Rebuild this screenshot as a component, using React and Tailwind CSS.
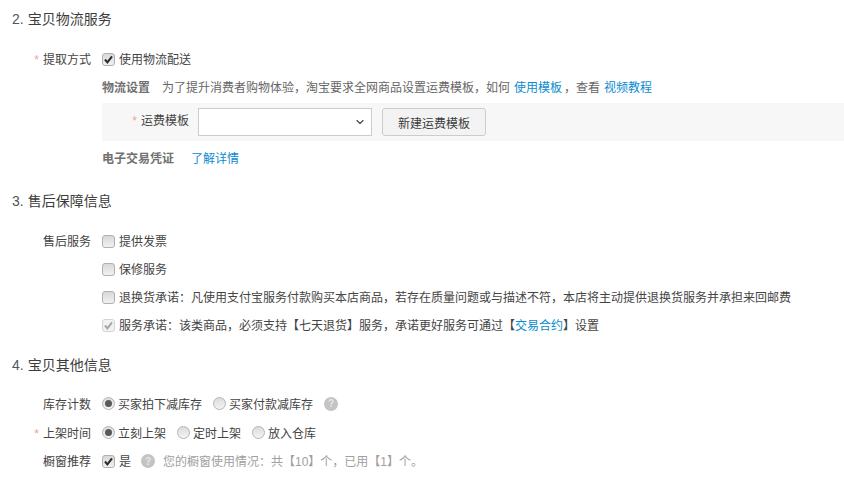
import { ChevronDown } from "lucide-react";

function Checkbox({ checked, disabled }) {
  return (
    <span
      className={
        "flex h-[13px] w-[13px] shrink-0 items-center justify-center rounded-[3px] border " +
        (disabled
          ? "border-[#d4d4d4] bg-[#f2f2f2]"
          : "border-[#b0b0b0] bg-gradient-to-b from-[#d8d8d8] to-[#f2f2f2]")
      }
    >
      {checked && (
        <svg viewBox="0 0 11 11" className="h-[11px] w-[11px]">
          <path
            d="M2 5.5 L4.4 8.4 L9 2.4"
            fill="none"
            stroke={disabled ? "#a6a6a6" : "#2b2b2b"}
            strokeWidth="2"
          />
        </svg>
      )}
    </span>
  );
}

function Radio({ checked }) {
  return (
    <span className="flex h-[13px] w-[13px] shrink-0 items-center justify-center rounded-full border border-[#b4b4b4] bg-gradient-to-b from-[#dcdcdc] to-[#f4f4f4]">
      {checked && <span className="h-[7px] w-[7px] rounded-full bg-[#5a5a5a]" />}
    </span>
  );
}

function Help() {
  return (
    <span className="flex h-[14px] w-[14px] shrink-0 items-center justify-center rounded-full bg-[#c4c4c4] text-[10px] font-bold text-[#e8e8e8]">
      ?
    </span>
  );
}

function Star() {
  return <span className="mr-[4px] text-[12px] text-[#f0a0a0]">*</span>;
}

function Heading({ num, children }) {
  return (
    <h2 className="flex h-[38px] items-center pl-[12px] text-[14px] font-normal text-[#3c3c3c]">
      <span className="mr-[4px] text-[14px] text-[#555555]">{num}.</span>
      {children}
    </h2>
  );
}

function Row({ label, required, children, className = "h-[28px]" }) {
  return (
    <div className={"flex items-center " + className}>
      <div className="flex w-[91px] shrink-0 items-center justify-end pt-[2px]">
        {required && <Star />}
        {label}
      </div>
      <div className="ml-[11px] flex items-center">{children}</div>
    </div>
  );
}

function Option({ checked, children }) {
  return (
    <label className="mr-[11px] flex items-center">
      <Radio checked={checked} />
      <span className="ml-[3px] pt-[2px]">{children}</span>
    </label>
  );
}

function Check({ checked, disabled, children }) {
  return (
    <label className="flex items-center">
      <Checkbox checked={checked} disabled={disabled} />
      <span className="ml-[4px] pt-[2px]">{children}</span>
    </label>
  );
}

export default function App() {
  return (
    <div
      className="h-[481px] w-[844px] overflow-hidden bg-white text-[12px] text-[#444444]"
      style={{ fontFamily: '"Liberation Sans", "Noto Sans CJK SC", sans-serif' }}
    >
      <Heading num="2">宝贝物流服务</Heading>
      <div className="mt-[7px]">
        <Row label="提取方式" required>
          <Check checked>使用物流配送</Check>
        </Row>
        <div className="ml-[102px]">
          <div className="flex h-[28px] items-center pt-[2px] text-[#666666]">
            <span className="font-bold text-[#707070]">物流设置</span>
            <span className="ml-[12px]">为了提升消费者购物体验，淘宝要求全网商品设置运费模板，如何</span>
            <a className="ml-[4px] text-[#0a8bd0]">使用模板</a>
            <span className="ml-[2px]">，查看</span>
            <a className="ml-[4px] text-[#0a8bd0]">视频教程</a>
          </div>
          <div className="mt-[2px] flex h-[38px] items-center bg-[#f7f7f7]">
            <div className="flex w-[87px] justify-end pb-[2px]">
              <Star />
              <span>运费模板</span>
            </div>
            <div className="ml-[9px] flex h-[28px] w-[174px] items-center justify-end border border-[#cccccc] bg-white pr-[5px]">
              <ChevronDown size={12} strokeWidth={2.25} color="#444444" />
            </div>
            <button className="ml-[10px] h-[28px] w-[104px] rounded-[3px] border border-[#cccccc] bg-[#f3f3f3] pt-[3px] text-[12px] text-[#3c3c3c]">
              新建运费模板
            </button>
          </div>
          <div className="mt-[3px] flex h-[28px] items-center pt-[2px]">
            <span className="font-bold text-[#707070]">电子交易凭证</span>
            <a className="ml-[17px] text-[#0a8bd0]">了解详情</a>
          </div>
        </div>
      </div>

      <div className="mt-[10px]">
        <Heading num="3">售后保障信息</Heading>
      </div>
      <div className="mt-[7px]">
        <Row label="售后服务">
          <Check>提供发票</Check>
        </Row>
        <Row>
          <Check>保修服务</Check>
        </Row>
        <Row>
          <Check>退换货承诺：凡使用支付宝服务付款购买本店商品，若存在质量问题或与描述不符，本店将主动提供退换货服务并承担来回邮费</Check>
        </Row>
        <Row>
          <Check checked disabled>
            服务承诺：该类商品，必须支持【七天退货】服务，承诺更好服务可通过【<a className="text-[#0a8bd0]">交易合约</a>】设置
          </Check>
        </Row>
      </div>

      <div className="mt-[7px]">
        <Heading num="4">宝贝其他信息</Heading>
      </div>
      <div className="mt-[5px]">
        <Row label="库存计数" className="h-[29px]">
          <Option checked>买家拍下减库存</Option>
          <Option>买家付款减库存</Option>
          <Help />
        </Row>
        <Row label="上架时间" required className="h-[29px]">
          <Option checked>立刻上架</Option>
          <Option>定时上架</Option>
          <Option>放入仓库</Option>
        </Row>
        <Row label="橱窗推荐">
          <Check checked>是</Check>
          <span className="ml-[10px]"><Help /></span>
          <span className="ml-[8px] pt-[2px] text-[#a0a0a0]">您的橱窗使用情况：共【10】个，已用【1】个。</span>
        </Row>
      </div>
    </div>
  );
}
